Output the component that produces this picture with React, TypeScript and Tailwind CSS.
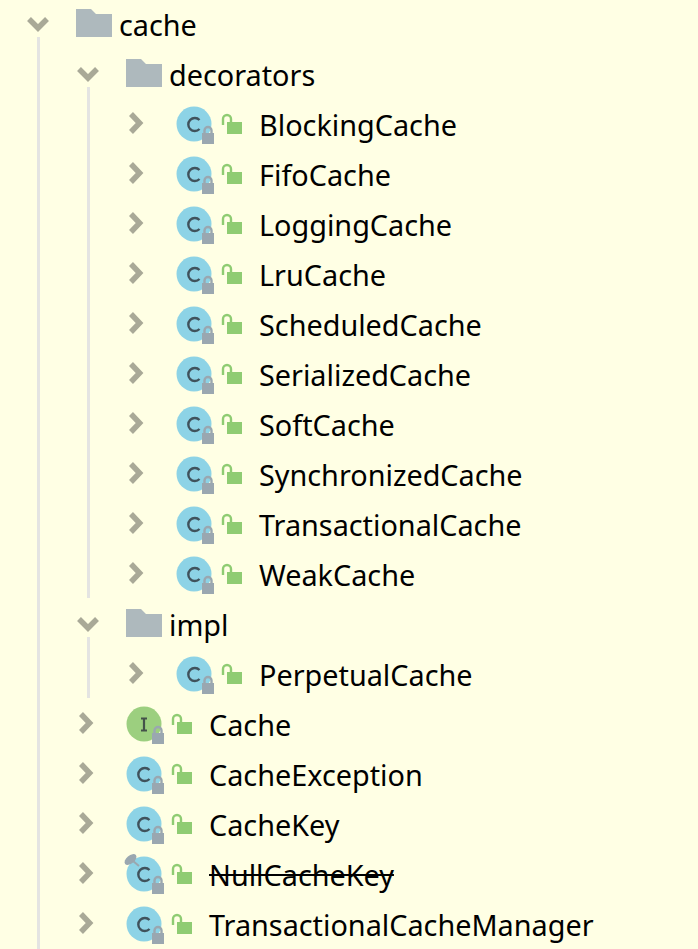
type Kind = "class" | "interface" | "deprecated";

const decorators = [
  "BlockingCache",
  "FifoCache",
  "LoggingCache",
  "LruCache",
  "ScheduledCache",
  "SerializedCache",
  "SoftCache",
  "SynchronizedCache",
  "TransactionalCache",
  "WeakCache",
];

function ChevronDown() {
  return (
    <svg width="22" height="50" viewBox="0 0 22 50" className="shrink-0">
      <path d="M2 19L11 28L20 19" fill="none" stroke="#a9a997" strokeWidth="5.5" />
    </svg>
  );
}

function ChevronRight() {
  return (
    <svg width="22" height="50" viewBox="0 0 22 50" className="shrink-0">
      <path d="M4 14L12.6 23L4 32" fill="none" stroke="#a9a997" strokeWidth="5.5" />
    </svg>
  );
}

function FolderIcon() {
  return (
    <svg width="36" height="50" viewBox="0 0 36 50" className="shrink-0">
      <path d="M0 9H15L20 14H36V37H0Z" fill="#aeb9bd" />
    </svg>
  );
}

function TypeIcon({ kind }: { kind: Kind }) {
  return (
    <svg width="40" height="50" viewBox="0 0 40 50" className="shrink-0 overflow-visible">
      <circle cx="18" cy="24" r="17.5" fill={kind === "interface" ? "#9ccf7f" : "#8dd3e6"} />
      {kind === "interface" ? (
        <path d="M15 18.5H21M18 18.5V30.5M15 30.5H21" fill="none" stroke="#44524a" strokeWidth="2.2" />
      ) : (
        <path d="M23.5 20A6.5 6.5 0 1 0 23.5 29" fill="none" stroke="#40525c" strokeWidth="2.4" />
      )}
      {kind === "deprecated" && (
        <g>
          <ellipse cx="4.5" cy="9.5" rx="7" ry="4" transform="rotate(-40 4.5 9.5)" fill="#9aa7b0" />
          <path d="M7 11L13 16" stroke="#9aa7b0" strokeWidth="2" />
        </g>
      )}
      <rect x="26" y="33" width="12" height="11" fill="#9aa7b0" />
      <path d="M28.5 33V30.5A3.5 3.5 0 0 1 35.5 30.5V33" fill="none" stroke="#9aa7b0" strokeWidth="2.4" />
    </svg>
  );
}

function OpenLock() {
  return (
    <svg width="22" height="50" viewBox="0 0 22 50" className="shrink-0">
      <rect x="6" y="22" width="15" height="12" fill="#8fcc72" />
      <path d="M2 25V19A4 4 0 0 1 10 19V23" fill="none" stroke="#8fcc72" strokeWidth="2.4" />
    </svg>
  );
}

function FolderRow({ name }: { name: string }) {
  return (
    <div className="flex h-[50px] items-center pl-[27px]">
      <ChevronDown />
      <div className="ml-[27px] flex items-center">
        <FolderIcon />
        <span className="ml-[7px] text-[28.8px] leading-[50px] text-black">{name}</span>
      </div>
    </div>
  );
}

function TypeRow({ name, kind = "class" }: { name: string; kind?: Kind }) {
  return (
    <div className="flex h-[50px] items-center pl-[27px]">
      <ChevronRight />
      <div className="ml-[27px] flex items-center">
        <TypeIcon kind={kind} />
        <div className="ml-[5px]">
          <OpenLock />
        </div>
        <span
          className={
            kind === "deprecated"
              ? "ml-[16px] text-[28.8px] leading-[50px] text-black line-through"
              : "ml-[16px] text-[28.8px] leading-[50px] text-black"
          }
        >
          {name}
        </span>
      </div>
    </div>
  );
}

function Children({ children, endGap }: { children: React.ReactNode; endGap?: boolean }) {
  return (
    <div className="relative pl-[50px]">
      <div
        className={
          endGap
            ? "absolute left-[37px] top-[-13px] bottom-[2px] w-[3px] bg-[#e4e4e2]"
            : "absolute left-[37px] top-[-13px] bottom-0 w-[3px] bg-[#e4e4e2]"
        }
      />
      {children}
    </div>
  );
}

export default function App() {
  return (
    <div className="h-[949px] w-[698px] overflow-hidden bg-[#ffffe4] font-['Noto_Sans',sans-serif]">
      <FolderRow name="cache" />
      <Children>
        <FolderRow name="decorators" />
        <Children endGap>
          {decorators.map((name) => (
            <TypeRow key={name} name={name} />
          ))}
        </Children>
        <FolderRow name="impl" />
        <Children endGap>
          <TypeRow name="PerpetualCache" />
        </Children>
        <TypeRow name="Cache" kind="interface" />
        <TypeRow name="CacheException" />
        <TypeRow name="CacheKey" />
        <TypeRow name="NullCacheKey" kind="deprecated" />
        <TypeRow name="TransactionalCacheManager" />
      </Children>
    </div>
  );
}
